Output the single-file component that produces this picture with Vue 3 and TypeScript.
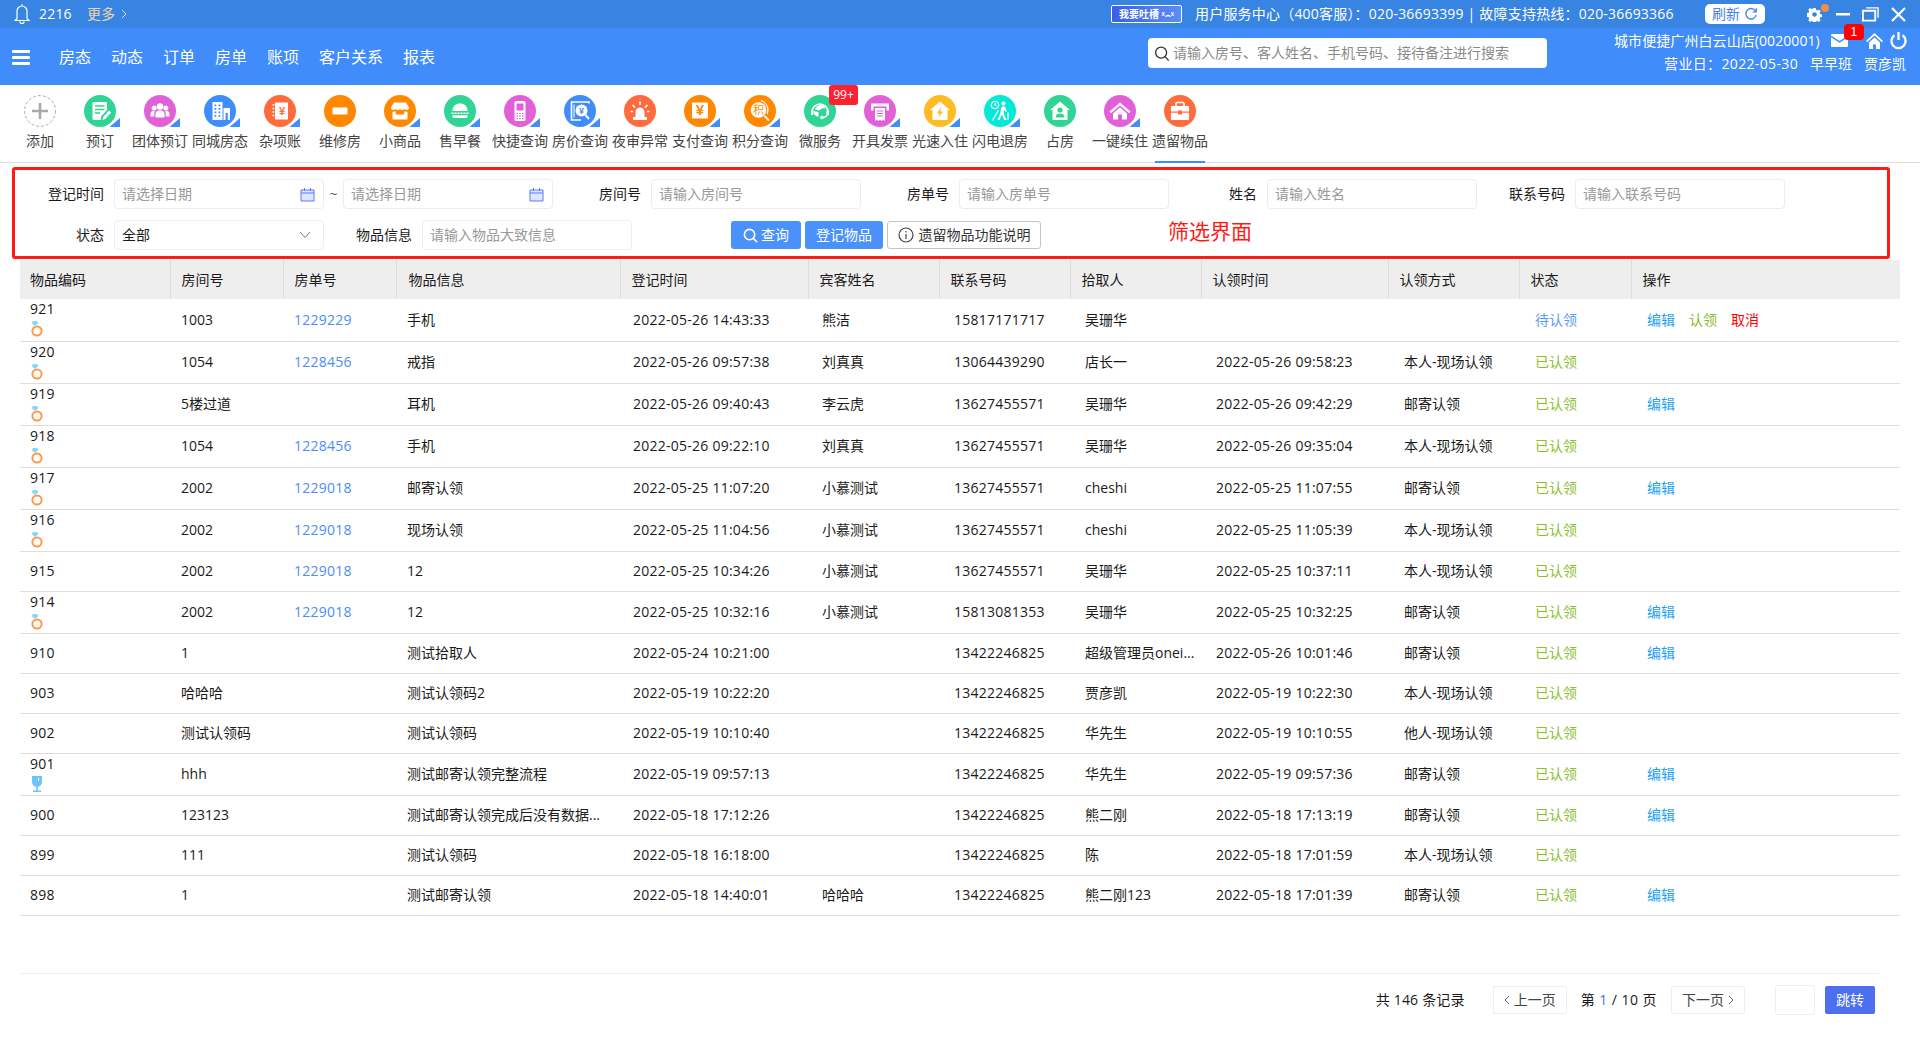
<script setup lang="ts">
interface Tool { label: string; color: string; svg: string; corner: boolean; badge?: string }
interface Row {
  code: string; mark?: 'ring' | 'cup'; room: string; bill: string; info: string; reg: string;
  guest: string; phone: string; picker: string; claim: string; way: string; status: string; ops: string[];
}

const GREEN = '#30d595', PINK = '#e160d8', BLUE = '#3f8cfa', RED = '#ff6b3d', ORANGE = '#ff8800', YELLOW = '#ffbb22', CYAN = '#06e8d8'
const W = '#fff'

const tools: Tool[] = [
  { label: '预订', color: GREEN, corner: true, svg: `<path d="M9.5 7H22a1 1 0 0 1 1 1v7l-6 6.5V25H9.5a1 1 0 0 1-1-1V8a1 1 0 0 1 1-1z" fill="${W}"/><path d="M11 11h9.500M11 14.500h9.500M11 18h5" stroke="${GREEN}" stroke-width="1.500"/><path d="M18.500 25l.6-3 5.900-6.500 2.200 2-5.900 6.500z" fill="${W}"/>` },
  { label: '团体预订', color: PINK, corner: true, svg: `<circle cx="16" cy="11.500" r="3.200" fill="${W}"/><circle cx="10.200" cy="13" r="2.500" fill="${W}"/><circle cx="21.800" cy="13" r="2.500" fill="${W}"/><path d="M11.500 22.500v-3.500c0-2.500 2-3.800 4.500-3.800s4.500 1.300 4.500 3.800v3.500z" fill="${W}"/><path d="M6.500 21.500v-2.800c0-1.900 1.700-3 3.700-3 .3 0 .5 0 .7.1-.4.800-.6 1.700-.6 2.700v3zM25.500 21.500v-2.800c0-1.900-1.700-3-3.700-3-.3 0-.5 0-.7.1.4.800.6 1.700.6 2.700v3z" fill="${W}"/>` },
  { label: '同城房态', color: BLUE, corner: true, svg: `<path d="M8.500 7h10v18h-10z" fill="${W}"/><path d="M10.500 9.500h1.800v1.800h-1.800zM14.500 9.500h1.800v1.800h-1.800zM10.500 13h1.800v1.800h-1.800zM14.500 13h1.800v1.800h-1.800zM10.500 16.500h1.800v1.800h-1.800zM14.500 16.500h1.800v1.800h-1.800zM10.500 20h1.800v1.800h-1.800zM14.500 20h1.800v1.800h-1.800z" fill="${BLUE}"/><path d="M19.500 13H26v12h-2.200v-7h-2.200v7h-2.100z" fill="${W}"/>` },
  { label: '杂项账', color: RED, corner: true, svg: `<path d="M11 7.500h13v17H11z" fill="${W}"/><path d="M8.500 10h4M8.500 13.500h4M8.500 17h4M8.500 20.500h4" stroke="${W}" stroke-width="1.300"/><path d="M10.500 9.500v12" stroke="${RED}" stroke-width=".8"/><text x="18" y="20" text-anchor="middle" font-size="11" font-weight="700" font-family="Liberation Sans, sans-serif" fill="${RED}">¥</text>` },
  { label: '维修房', color: ORANGE, corner: false, svg: `<rect x="8.500" y="12.500" width="15" height="7" rx="1" fill="${W}"/>` },
  { label: '小商品', color: ORANGE, corner: true, svg: `<path d="M10 7.500h12l3 5c0 1.500-1 2.500-2.300 2.500-1 0-1.800-.5-2.200-1.300-.5.800-1.400 1.300-2.300 1.300s-1.700-.5-2.200-1.300c-.5.800-1.300 1.300-2.200 1.300s-1.800-.5-2.300-1.300c-.4.800-1.200 1.300-2.200 1.300C8 15 7 14 7 12.500z" fill="${W}"/><path d="M8.500 16.500c1 .3 2.200.2 3.200-.3v3.300h8.600v-3.300c1 .5 2.200.6 3.200.3V24.500h-15z" fill="${W}"/>` },
  { label: '售早餐', color: GREEN, corner: true, svg: `<path d="M8.500 16c0-5 3.400-7.500 7.500-7.500s7.500 2.500 7.500 7.500z" fill="${W}"/><path d="M7.500 18.200h17" stroke="${W}" stroke-width="1.500" stroke-dasharray="2 1"/><path d="M8.500 20.200h15v1.300a1.500 1.500 0 0 1-1.500 1.500H10a1.500 1.500 0 0 1-1.500-1.500z" fill="${W}"/>` },
  { label: '快捷查询', color: PINK, corner: true, svg: `<rect x="10.500" y="6" width="11" height="20" rx="1.500" fill="${W}"/><rect x="12.500" y="8.500" width="7" height="7" fill="${PINK}"/><path d="M12.500 18h1.500v1.200h-1.500zM15.200 18h1.500v1.200h-1.500zM18 18h1.500v1.200H18zM12.500 20.500h1.500v1.200h-1.500zM15.200 20.500h1.500v1.200h-1.500zM18 20.500h1.500v1.200H18zM12.500 23h1.500v1.200h-1.500zM15.200 23h1.500v1.200h-1.500zM18 23h1.500v1.200H18z" fill="${PINK}"/>` },
  { label: '房价查询', color: BLUE, corner: true, svg: `<path d="M25 8.500V7H7.500v18H17" fill="none" stroke="${W}" stroke-width="1.600"/><path d="M10 9.500v13" stroke="${W}" stroke-width="1"/><circle cx="17.500" cy="15.500" r="6" fill="${W}"/><path d="M21.500 20l3.500 4" stroke="${W}" stroke-width="2"/><text x="17.500" y="19" text-anchor="middle" font-size="9" font-weight="700" font-family="Liberation Sans, sans-serif" fill="${BLUE}">¥</text>` },
  { label: '夜审异常', color: RED, corner: false, svg: `<path d="M11.500 22v-5a4.500 4.500 0 0 1 9 0v5z" fill="${W}"/><path d="M9 22h14v3H9z" fill="${W}"/><path d="M16 6.500v3.500M8.500 10l2.500 2.500M23.500 10L21 12.500M6.500 16.500H9M23 16.500h2.500" stroke="${W}" stroke-width="1.700"/>` },
  { label: '支付查询', color: ORANGE, corner: true, svg: `<path d="M8 7.500h16V24l-1.300-1-1.400 1-1.300-1-1.300 1-1.300-1-1.400 1-1.300-1-1.300 1-1.300-1-1.300 1-1.300-1L8 24z" fill="${W}"/><text x="16" y="20" text-anchor="middle" font-size="15" font-weight="700" font-family="Liberation Sans, sans-serif" fill="${ORANGE}">¥</text>` },
  { label: '积分查询', color: ORANGE, corner: true, svg: `<circle cx="14.500" cy="15" r="7.800" fill="${W}"/><path d="M17 5.500A9.800 9.800 0 0 1 23 19" fill="none" stroke="${W}" stroke-width="1.200"/><path d="M20.500 21l4.500 4.500" stroke="${W}" stroke-width="2"/><text x="14.500" y="19" text-anchor="middle" font-size="11" font-family="Noto Sans CJK SC, sans-serif" fill="${ORANGE}">积</text>` },
  { label: '微服务', color: GREEN, corner: false, badge: '99+', svg: `<path d="M8 17a8 8 0 0 1 16 0" fill="none" stroke="${W}" stroke-width="1.600"/><path d="M11 14.500c1-3 3-4.500 5.500-4.500 2.400 0 4.300 1.300 5 3.500-2.500-.6-4.500 0-5.500 1.500-1.200.3-3.300.4-5-.5z" fill="${W}"/><path d="M9.500 15.500c1.500 1 3 1.300 5 1.200V22a6 6 0 0 1-5-6.500z" fill="${W}"/><circle cx="18" cy="22.500" r="1.800" fill="${W}"/><path d="M24 17c0 3.500-2.500 5.500-6 5.500" fill="none" stroke="${W}" stroke-width="1.200"/><path d="M7 15.500h2.500v4.500H7zM22.500 15.500H25v4.500h-2.500z" fill="${W}"/>` },
  { label: '开具发票', color: PINK, corner: true, svg: `<path d="M7 8.500h18v7h-2.500v-4h-13v4H7z" fill="${W}"/><path d="M11 13h10v13l-1.700-1.200-1.600 1.200-1.700-1.200-1.700 1.200-1.600-1.200L11 26z" fill="${W}"/><path d="M13 16h6M13 18.500h6M13 21h6" stroke="${PINK}" stroke-width="1.200"/>` },
  { label: '光速入住', color: YELLOW, corner: true, svg: `<path d="M16 6.500l10 8.500h-2.500v10h-15V15H6z" fill="${W}"/><path d="M17 12l-4 6.500h2.700l-1.200 4.500 4.500-6.500h-2.700z" fill="${YELLOW}"/>` },
  { label: '闪电退房', color: CYAN, corner: true, svg: `<circle cx="11" cy="10" r="3.700" fill="none" stroke="${W}" stroke-width="1.300"/><path d="M11 8v2.300h1.600" fill="none" stroke="${W}" stroke-width="1"/><circle cx="19.500" cy="8.500" r="2" fill="${W}"/><path d="M18 11.500h3l2 5-1.500.5-1.200-2.500-.6 4 2.800 6.500h-2.200l-2.400-5.500-2.400 5.500h-2l3-7.500.4-3.500z" fill="${W}"/><path d="M14.500 15L8.500 25.500" stroke="${W}" stroke-width="1.300"/><path d="M24 17.500v7.500" stroke="${W}" stroke-width="1.300"/>` },
  { label: '占房', color: GREEN, corner: false, svg: `<path d="M16 6.500L26 15h-2.500v10h-15V15H6z" fill="${W}"/><circle cx="16" cy="15" r="2.600" fill="${GREEN}"/><path d="M11.500 22.500c0-2.800 2-4 4.500-4s4.500 1.200 4.500 4z" fill="${GREEN}"/>` },
  { label: '一键续住', color: PINK, corner: true, svg: `<path d="M16 7.500L26.500 16.500l-1.500 1.800L16 10.500l-9 7.800-1.500-1.800z" fill="${W}"/><path d="M9 18.500l7-6 7 6v6h-5v-5h-4v5H9z" fill="${W}"/>` },
  { label: '遗留物品', color: RED, corner: false, svg: `<path d="M12 11V8.500a1 1 0 0 1 1-1h6a1 1 0 0 1 1 1V11" fill="none" stroke="${W}" stroke-width="1.600"/><path d="M7 11h18v5.500H18v-1h-4v1H7z" fill="${W}"/><path d="M7 17.800h7v1.700h4v-1.700h7V25H7z" fill="${W}"/>` },
]

const menus = ['房态', '动态', '订单', '房单', '账项', '客户关系', '报表']
const columns = ['物品编码', '房间号', '房单号', '物品信息', '登记时间', '宾客姓名', '联系号码', '拾取人', '认领时间', '认领方式', '状态', '操作']

const r = (code: string, mark: Row['mark'], room: string, bill: string, info: string, reg: string, guest: string, phone: string, picker: string, claim: string, way: string, ops: string[] = [], status = '已认领'): Row =>
  ({ code, mark, room, bill, info, reg, guest, phone, picker, claim, way, status, ops })

const rows: Row[] = [
  r('921', 'ring', '1003', '1229229', '手机', '2022-05-26 14:43:33', '熊洁', '15817171717', '吴珊华', '', '', ['编辑', '认领', '取消'], '待认领'),
  r('920', 'ring', '1054', '1228456', '戒指', '2022-05-26 09:57:38', '刘真真', '13064439290', '店长一', '2022-05-26 09:58:23', '本人-现场认领'),
  r('919', 'ring', '5楼过道', '', '耳机', '2022-05-26 09:40:43', '李云虎', '13627455571', '吴珊华', '2022-05-26 09:42:29', '邮寄认领', ['编辑']),
  r('918', 'ring', '1054', '1228456', '手机', '2022-05-26 09:22:10', '刘真真', '13627455571', '吴珊华', '2022-05-26 09:35:04', '本人-现场认领'),
  r('917', 'ring', '2002', '1229018', '邮寄认领', '2022-05-25 11:07:20', '小慕测试', '13627455571', 'cheshi', '2022-05-25 11:07:55', '邮寄认领', ['编辑']),
  r('916', 'ring', '2002', '1229018', '现场认领', '2022-05-25 11:04:56', '小慕测试', '13627455571', 'cheshi', '2022-05-25 11:05:39', '本人-现场认领'),
  r('915', undefined, '2002', '1229018', '12', '2022-05-25 10:34:26', '小慕测试', '13627455571', '吴珊华', '2022-05-25 10:37:11', '本人-现场认领'),
  r('914', 'ring', '2002', '1229018', '12', '2022-05-25 10:32:16', '小慕测试', '15813081353', '吴珊华', '2022-05-25 10:32:25', '邮寄认领', ['编辑']),
  r('910', undefined, '1', '', '测试拾取人', '2022-05-24 10:21:00', '', '13422246825', '超级管理员onei...', '2022-05-26 10:01:46', '邮寄认领', ['编辑']),
  r('903', undefined, '哈哈哈', '', '测试认领码2', '2022-05-19 10:22:20', '', '13422246825', '贾彦凯', '2022-05-19 10:22:30', '本人-现场认领'),
  r('902', undefined, '测试认领码', '', '测试认领码', '2022-05-19 10:10:40', '', '13422246825', '华先生', '2022-05-19 10:10:55', '他人-现场认领'),
  r('901', 'cup', 'hhh', '', '测试邮寄认领完整流程', '2022-05-19 09:57:13', '', '13422246825', '华先生', '2022-05-19 09:57:36', '邮寄认领', ['编辑']),
  r('900', undefined, '123123', '', '测试邮寄认领完成后没有数据...', '2022-05-18 17:12:26', '', '13422246825', '熊二刚', '2022-05-18 17:13:19', '邮寄认领', ['编辑']),
  r('899', undefined, '111', '', '测试认领码', '2022-05-18 16:18:00', '', '13422246825', '陈', '2022-05-18 17:01:59', '本人-现场认领'),
  r('898', undefined, '1', '', '测试邮寄认领', '2022-05-18 14:40:01', '哈哈哈', '13422246825', '熊二刚123', '2022-05-18 17:01:39', '邮寄认领', ['编辑']),
]

const opClass: Record<string, string> = { 编辑: 'op-edit', 认领: 'op-claim', 取消: 'op-cancel' }
</script>

<template>
  <div class="page">
    <header class="topbar">
      <div class="top-left">
        <svg class="bell" viewBox="0 0 16 22" fill="none" stroke="#fff" stroke-width="1.200">
          <path d="M8 3V1.200M3 15.500V8a5 5 0 0 1 10 0v7.500l2 2H1z" />
          <path d="M6 18.500a2 2 0 0 0 4 0" />
        </svg>
        <span class="count">2216</span>
        <span class="more">更多</span>
        <svg class="more-arrow" viewBox="0 0 6 10" fill="none" stroke="#e8dcc8" stroke-width="1"><path d="M1 1l4 4-4 4" /></svg>
      </div>
      <div class="top-right">
        <span class="feedback">我要吐槽 <b>ˣ⌢ˣ</b></span>
        <span class="service">用户服务中心（400客服）：020-36693399 | 故障支持热线：020-36693366</span>
        <span class="refresh">刷新
          <svg viewBox="0 0 16 16" fill="none" stroke="#4a7fe8" stroke-width="1.500"><path d="M13.500 5A6 6 0 1 0 14 9" /><path d="M14 1.500V5.500H10" /></svg>
        </span>
        <span class="gear">
          <svg viewBox="0 0 16 16" fill="#fff"><path d="M6.700 1h2.600l.4 2 1.300.6 1.800-1 1.800 1.900-1 1.700.5 1.300 2 .5v2.600l-2 .4-.6 1.300 1 1.800-1.800 1.800-1.700-1-1.300.5-.5 2H6.700l-.4-2-1.300-.5-1.800 1-1.800-1.800 1-1.800-.5-1.300-2-.4V6.500l2-.5.5-1.300-1-1.700L3.200 1l1.800 1 1.300-.5zM8 5.500a2.500 2.500 0 1 0 0 5 2.500 2.500 0 0 0 0-5z" /></svg>
          <i class="gear-dot"></i>
        </span>
        <svg class="win win-min" viewBox="0 0 14 14" fill="#fff"><path d="M0 6h14v2.500H0z" /></svg>
        <svg class="win win-max" viewBox="0 0 18 16" fill="none" stroke="#fff"><path d="M1 4.500h13V15H1z" stroke-width="2" /><path d="M4.500 1.500H17V12" stroke-width="1.500" /></svg>
        <svg class="win win-close" viewBox="0 0 15 15" fill="none" stroke="#fff" stroke-width="2.200"><path d="M1 1l13 13M14 1L1 14" /></svg>
      </div>
    </header>

    <nav class="navbar">
      <div class="burger"><i></i><i></i><i></i></div>
      <ul class="menu">
        <li v-for="m in menus" :key="m">{{ m }}</li>
      </ul>
      <div class="search">
        <svg viewBox="0 0 18 18" fill="none" stroke="#333" stroke-width="1.500"><circle cx="8" cy="8" r="6.200" /><path d="M12.500 12.500l4 4.500" /></svg>
        <span>请输入房号、客人姓名、手机号码、接待备注进行搜索</span>
      </div>
      <div class="user">
        <div class="user-line">
          <span class="hotel">城市便捷广州白云山店(0020001)</span>
          <span class="mail">
            <svg viewBox="0 0 17 13"><path d="M0 1a1 1 0 0 1 1-1h15a1 1 0 0 1 1 1v.500L8.500 7 0 1.500z" fill="#fff" /><path d="M0 3.200L8.500 8.700 17 3.200V12a1 1 0 0 1-1 1H1a1 1 0 0 1-1-1z" fill="#fff" /></svg>
            <em>1</em>
          </span>
          <svg class="home" viewBox="0 0 17 16" fill="#fff"><path d="M8.500 0L17 8l-1.200 1.200-7.300-6.700-7.300 6.700L0 8z" /><path d="M3 9.500l5.500-5 5.500 5V16h-4v-4.500H7V16H3z" /></svg>
          <svg class="power" viewBox="0 0 17 18" fill="none" stroke="#fff" stroke-width="2.300"><path d="M8.500 0v8" /><path d="M4.500 3.300a7 7 0 1 0 8 0" /></svg>
        </div>
        <div class="user-line second">
          <span class="biz-day">营业日：2022-05-30</span>
          <span>早早班</span>
          <span>贾彦凯</span>
        </div>
      </div>
    </nav>

    <section class="toolbar">
      <div class="tool">
        <span class="circle add">
          <svg viewBox="0 0 32 32"><circle cx="16" cy="16" r="15.400" fill="none" stroke="#aaa" stroke-width="1" stroke-dasharray="3 2" /><path d="M16 8v16M8 16h16" stroke="#a9a9a9" stroke-width="2.600" /></svg>
        </span>
        <span class="tool-label">添加</span>
      </div>
      <div v-for="(t, i) in tools" :key="t.label" class="tool" :class="{ active: i === tools.length - 1 }">
        <span class="circle">
          <svg viewBox="0 0 32 32">
            <circle cx="16" cy="16" r="16" :fill="t.color" />
            <g v-html="t.svg"></g>
          </svg>
          <svg v-if="t.corner" class="corner" viewBox="0 0 14 12"><path d="M14 0v12H0z" fill="#fff" /><path d="M14 3v9H3.500z" fill="#3f8cfa" /></svg>
        </span>
        <span class="tool-label">{{ t.label }}</span>
        <span v-if="t.badge" class="tool-badge">{{ t.badge }}</span>
      </div>
    </section>

    <section class="filter">
      <div class="filter-row">
        <label>登记时间</label>
        <div class="field date"><span>请选择日期</span><svg viewBox="0 0 15 15" fill="#dfe6ff" stroke="#5b7cf0" stroke-width="1"><path d="M1 3h13v11H1z" /><path d="M1 6h13M4.500 1v3M10.500 1v3" fill="none" /></svg></div>
        <span class="tilde">~</span>
        <div class="field date"><span>请选择日期</span><svg viewBox="0 0 15 15" fill="#dfe6ff" stroke="#5b7cf0" stroke-width="1"><path d="M1 3h13v11H1z" /><path d="M1 6h13M4.500 1v3M10.500 1v3" fill="none" /></svg></div>
        <label>房间号</label>
        <div class="field"><span>请输入房间号</span></div>
        <label>房单号</label>
        <div class="field"><span>请输入房单号</span></div>
        <label>姓名</label>
        <div class="field"><span>请输入姓名</span></div>
        <label>联系号码</label>
        <div class="field"><span>请输入联系号码</span></div>
      </div>
      <div class="filter-row">
        <label>状态</label>
        <div class="field select"><span>全部</span><svg viewBox="0 0 12 8" fill="none" stroke="#777" stroke-width="1"><path d="M1 1l5 5.500L11 1" /></svg></div>
        <label>物品信息</label>
        <div class="field"><span>请输入物品大致信息</span></div>
        <button class="btn primary search-btn" type="button">
          <svg viewBox="0 0 16 16" fill="none" stroke="#fff" stroke-width="1.700"><circle cx="7" cy="7" r="5.500" /><path d="M11 11l4 4" /></svg>
          查询
        </button>
        <button class="btn primary" type="button">登记物品</button>
        <button class="btn ghost" type="button">
          <svg viewBox="0 0 16 16" fill="none" stroke="#444" stroke-width="1.200"><circle cx="8" cy="8" r="7" /><path d="M8 7v5M8 4v1.500" /></svg>
          遗留物品功能说明
        </button>
        <span class="note">筛选界面</span>
      </div>
    </section>

    <table class="grid">
      <colgroup>
        <col v-for="c in columns" :key="c" />
      </colgroup>
      <thead>
        <tr><th v-for="c in columns" :key="c">{{ c }}</th></tr>
      </thead>
      <tbody>
        <tr v-for="row in rows" :key="row.code" :class="{ tall: row.mark }">
          <td>
            <div class="code">{{ row.code }}</div>
            <svg v-if="row.mark === 'ring'" class="mark" viewBox="0 0 14 16"><path d="M3 0h4l1.500 2-3.500 3-3.500-3z" fill="#8fd6f5" /><circle cx="7" cy="10" r="4.600" fill="none" stroke="#ff9a4a" stroke-width="2" /></svg>
            <svg v-else-if="row.mark === 'cup'" class="mark" viewBox="0 0 14 16"><path d="M2 0h10v6a5 5 0 0 1-10 0z" fill="#6cc4fa" /><path d="M6.200 10h1.600v4.500H11V16H3v-1.500h3.200z" fill="#6cc4fa" /><path d="M8.500 2v3" stroke="#fff" /></svg>
          </td>
          <td>{{ row.room }}</td>
          <td class="bill">{{ row.bill }}</td>
          <td>{{ row.info }}</td>
          <td>{{ row.reg }}</td>
          <td>{{ row.guest }}</td>
          <td>{{ row.phone }}</td>
          <td>{{ row.picker }}</td>
          <td>{{ row.claim }}</td>
          <td>{{ row.way }}</td>
          <td :class="row.status === '已认领' ? 'done' : 'wait'">{{ row.status }}</td>
          <td class="ops"><span v-for="o in row.ops" :key="o" :class="opClass[o]">{{ o }}</span></td>
        </tr>
      </tbody>
    </table>

    <footer class="pager">
      <span class="total">共 146 条记录</span>
      <span class="page-btn">
        <svg viewBox="0 0 6 10" fill="none" stroke="#666"><path d="M5 1L1 5l4 4" /></svg>
        上一页
      </span>
      <span class="page-no">第 <b>1</b> / 10 页</span>
      <span class="page-btn">下一页
        <svg viewBox="0 0 6 10" fill="none" stroke="#666"><path d="M1 1l4 4-4 4" /></svg>
      </span>
      <span class="jump-input"></span>
      <span class="jump">跳转</span>
    </footer>
  </div>
</template>

<style scoped>
.page {
  width: 1920px;
  height: 1040px;
  overflow: hidden;
  background: #fff;
  color: #1a1a1a;
  font: 14px/20px "Open Sans", "Noto Sans CJK SC", sans-serif;
}
ul { margin: 0; padding: 0; list-style: none; }
svg { display: block; flex: none; }

.topbar {
  height: 28px;
  background: #3884e3;
  color: #fff;
  display: flex;
  justify-content: space-between;
  align-items: center;
  padding: 0 14px;
}
.top-left, .top-right { display: flex; align-items: center; }
.bell { width: 16px; height: 22px; margin-right: 9px; }
.count { width: 48px; letter-spacing: .2px; }
.more { color: #f3d3ab; font-size: 14px; }
.more-arrow { width: 6px; height: 10px; margin-left: 6px; }
.feedback {
  width: 71px;
  height: 18px;
  border: 1px solid #fff;
  border-radius: 2px;
  background: linear-gradient(90deg, #3a5fe6, #5c8df5);
  font-size: 10px;
  line-height: 16px;
  font-weight: 700;
  text-align: center;
  white-space: nowrap;
  overflow: hidden;
  margin-right: 13px;
  box-sizing: border-box;
}
.feedback b { font-size: 9px; }
.service { width: 510px; white-space: nowrap; font-size: 14px; letter-spacing: .2px; }
.refresh {
  width: 60px;
  height: 20px;
  background: #fff;
  border-radius: 5px;
  color: #4a7fe8;
  display: flex;
  align-items: center;
  justify-content: center;
  gap: 4px;
  line-height: 20px;
  margin-right: 42px;
}
.refresh svg { width: 14px; height: 14px; }
.gear { width: 29px; height: 16px; position: relative; }
.gear svg { width: 15px; height: 15px; margin-top: 1px; }
.gear-dot {
  position: absolute;
  left: 14px;
  top: -2px;
  width: 8px;
  height: 8px;
  border-radius: 50%;
  background: #f78c48;
}
.win-min { width: 14px; height: 14px; margin-right: 12px; }
.win-max { width: 17px; height: 16px; margin-right: 12px; }
.win-close { width: 15px; height: 15px; }

.navbar {
  height: 57px;
  background: #3f8cfa;
  color: #fff;
  display: flex;
  align-items: flex-start;
  padding-left: 12px;
}
.burger { width: 18px; margin-top: 22px; display: flex; flex-direction: column; gap: 3.500px; }
.burger i { height: 2.500px; background: #fff; border-radius: 1px; }
.menu { display: flex; gap: 20px; margin: 17px 0 0 29px; font-size: 16px; line-height: 24px; width: 1089px; }
.search {
  width: 399px;
  height: 30px;
  margin-top: 10px;
  background: #fff;
  border-radius: 4px;
  color: #8a8a8a;
  display: flex;
  align-items: center;
  gap: 3px;
  padding-left: 6px;
  box-sizing: border-box;
}
.search svg { width: 16px; height: 17px; }
.user { margin-left: 67px; width: 293px; }
.user-line { display: flex; align-items: center; height: 24px; padding-top: 1px; white-space: nowrap; box-sizing: border-box; }
.user-line.second { justify-content: flex-end; gap: 12px; padding-right: 1px; padding-top: 0; height: 24px; }
.hotel { letter-spacing: .08px; }
.biz-day { letter-spacing: .35px; }
.mail { position: relative; margin-left: 11px; width: 35px; }
.mail svg { width: 17px; height: 13px; }
.mail em {
  position: absolute;
  left: 13px;
  top: -10px;
  width: 20px;
  height: 16px;
  background: #f00;
  border-radius: 4px;
  font: normal 12px/16px "Liberation Sans", sans-serif;
  text-align: center;
}
.home { width: 17px; height: 16px; margin-right: 7px; }
.power { width: 17px; height: 18px; }

.toolbar {
  height: 78px;
  box-sizing: border-box;
  border-bottom: 1px solid #ddd;
  display: flex;
  padding: 10px 0 0 10px;
}
.tool {
  width: 60px;
  height: 67px;
  position: relative;
  display: flex;
  flex-direction: column;
  align-items: center;
  color: #444;
}
.tool.active::after {
  content: "";
  position: absolute;
  left: 5px;
  right: 5px;
  bottom: -1px;
  height: 2px;
  background: #3f8cfa;
}
.circle { width: 32px; height: 32px; position: relative; }
.circle > svg:first-child { width: 32px; height: 32px; }
.corner { position: absolute; right: -4px; bottom: 0; width: 14px; height: 12px; }
.tool-label { margin-top: 4px; white-space: nowrap; line-height: 20px; }
.tool-badge {
  position: absolute;
  left: 39px;
  top: -10px;
  width: 29px;
  height: 20px;
  background: #ff2030;
  border-radius: 3px;
  color: #fff;
  font-size: 12px;
  line-height: 20px;
  text-align: center;
  z-index: 1;
}

.filter {
  margin: 4px 30px 0 12px;
  height: 92px;
  box-sizing: border-box;
  border: 3px solid #ff1a14;
  border-radius: 3px;
  padding-top: 9px;
}
.filter-row { display: flex; align-items: center; height: 30px; }
.filter-row + .filter-row { margin-top: 11px; }
label { width: 89px; text-align: right; margin-right: 10px; color: #1a1a1a; white-space: nowrap; flex: none; }
.field {
  width: 210px;
  height: 30px;
  box-sizing: border-box;
  border: 1px solid #ebedf0;
  border-radius: 4px;
  padding: 0 7px;
  color: #999;
  display: flex;
  align-items: center;
  justify-content: space-between;
  flex: none;
}
.field.date svg { width: 15px; height: 15px; margin-right: 1px; }
.select { color: #1a1a1a; }
.select svg { width: 12px; height: 8px; margin-right: 5px; }
.tilde { width: 19px; text-align: center; color: #555; }
.filter-row > .field + label { width: 88px; }
.btn {
  height: 28px;
  border-radius: 3px;
  font: inherit;
  display: flex;
  align-items: center;
  justify-content: center;
  padding: 0;
  border: none;
  flex: none;
}
.primary { background: #4b91fb; color: #fff; width: 78px; margin-right: 4px; }
.search-btn { width: 70px; margin-left: 99px; gap: 3px; }
.search-btn svg { width: 15px; height: 15px; }
.ghost {
  width: 154px;
  background: #fff;
  border: 1px solid #c4c4c4;
  color: #333;
  gap: 5px;
  box-sizing: border-box;
}
.ghost svg { width: 16px; height: 16px; }
.note { color: #ff1a14; font-size: 21px; line-height: 28px; margin: -8px 0 0 127px; white-space: nowrap; }

.grid {
  width: 1880px;
  margin: 1px 0 0 20px;
  table-layout: fixed;
  border-collapse: collapse;
  border-spacing: 0;
  color: #1a1a1a;
}
.grid col:nth-child(1) { width: 150px; }
.grid col:nth-child(2), .grid col:nth-child(3) { width: 113px; }
.grid col:nth-child(4) { width: 224px; }
.grid col:nth-child(5) { width: 188px; }
.grid col:nth-child(9) { width: 187px; }
.grid col:nth-child(6), .grid col:nth-child(7), .grid col:nth-child(8), .grid col:nth-child(10) { width: 131px; }
.grid col:nth-child(11) { width: 112px; }
.grid col:nth-child(12) { width: 269px; }
th {
  height: 39px;
  background: #eee;
  font-weight: 400;
  text-align: left;
  padding: 0 0 0 11px;
  border-right: 1px solid #dcdcdc;
  box-sizing: border-box;
}
th:first-child { padding-left: 10px; }
th:nth-child(4) { padding-left: 12px; }
th:last-child { border-right: none; }
td {
  height: 40px;
  box-sizing: border-box;
  border-bottom: 1px solid #ddd;
  padding: 0 0 0 10px;
  white-space: nowrap;
  overflow: hidden;
}
tr.tall td { height: 42px; }
td:nth-child(2), td:nth-child(3), td:nth-child(4) { padding-left: 11px; }
td:nth-child(5) { padding-left: 13px; }
td:nth-child(6) { padding-left: 14px; }
td:nth-child(n+7) { padding-left: 15px; }
td:nth-child(n+10) { padding-left: 16px; }
td:nth-child(3), td:nth-child(5), td:nth-child(7), td:nth-child(9), .code { letter-spacing: .25px; }
.code { line-height: 20px; margin-top: -1px; }
.mark { width: 14px; height: 16px; margin-top: 2px; margin-bottom: 2px; }
.bill { color: #4c8df6; }
.wait { color: #5b9bf8; }
.done { color: #8ac02c; }
.ops span { margin-right: 14px; }
.op-edit { color: #1da1f2; }
.op-claim { color: #8ab92d; }
.op-cancel { color: #f00; }

.pager {
  width: 1860px;
  height: 43px;
  margin: 57px 0 0 20px;
  border-top: 1px solid #eeeef2;
  display: flex;
  align-items: center;
  justify-content: flex-end;
  box-sizing: border-box;
  padding-top: 10px;
  padding-right: 5px;
  color: #1a1a1a;
}
.total { margin-right: 28px; letter-spacing: .2px; }
.page-btn {
  width: 74px;
  height: 28px;
  box-sizing: border-box;
  border: 1px solid #eeeef2;
  border-radius: 2px;
  display: flex;
  align-items: center;
  justify-content: center;
  gap: 4px;
  color: #444;
}
.page-btn svg { width: 6px; height: 10px; }
.page-no { margin: 0 14px; white-space: nowrap; letter-spacing: .45px; }
.page-no b { font-weight: 400; color: #4c6ef0; }
.jump-input {
  width: 40px;
  height: 30px;
  box-sizing: border-box;
  border: 1px solid #eeeef2;
  border-radius: 3px;
  margin: 0 10px 0 30px;
}
.jump {
  width: 50px;
  height: 28px;
  background: #4c6ef0;
  border-radius: 2px;
  color: #fff;
  text-align: center;
  line-height: 28px;
}
</style>
